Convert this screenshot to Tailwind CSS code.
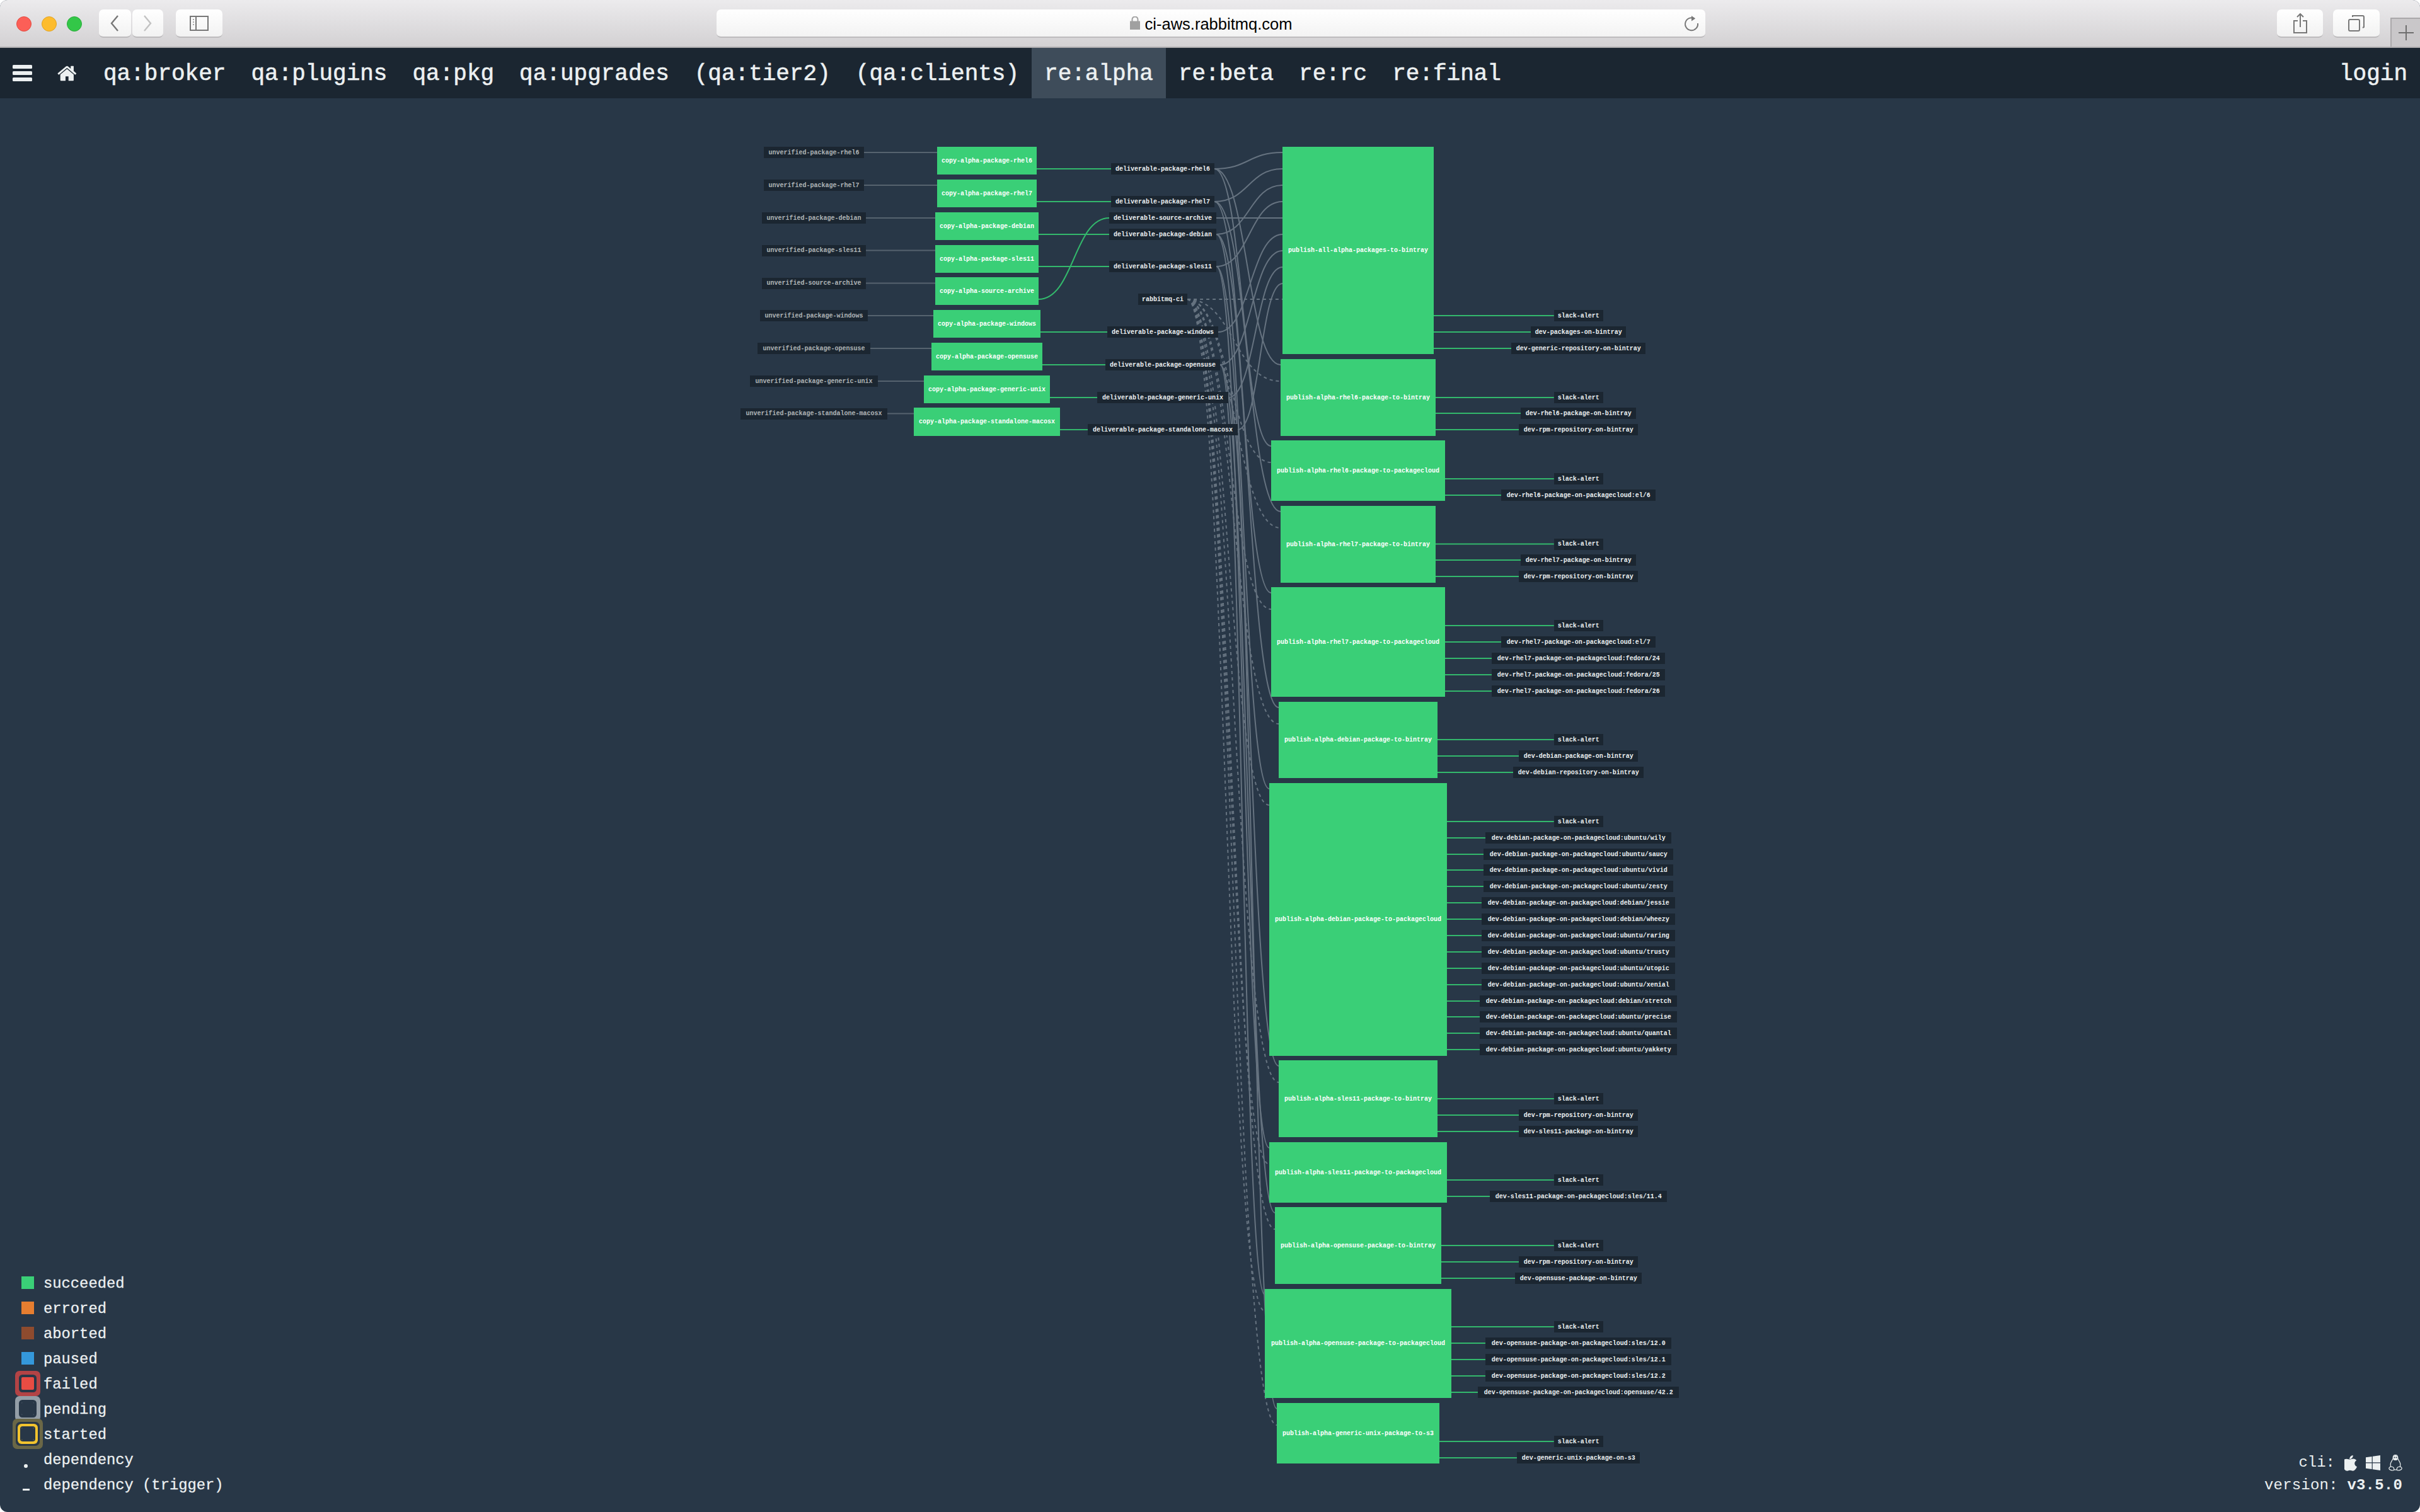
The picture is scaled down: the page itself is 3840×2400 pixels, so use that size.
<!DOCTYPE html>
<html lang="en">
<head>
    <meta charset="UTF-8">
    <title>ci-aws.rabbitmq.com</title>
    <script src="https://cdn.jsdelivr.net/npm/@tailwindcss/browser@4"></script>
</head>
<body class="bg-white [font-family:'Liberation_Mono',monospace]">
<div class="relative w-[3840px] h-[2400px] overflow-hidden rounded-[12px] bg-[#283747] flex flex-col">

    <!-- Safari toolbar -->
    <div class="h-[76px] shrink-0 flex items-center pt-px border-b-2 border-[#b0aeb0] bg-linear-to-b from-[#ecebed] to-[#d3d1d3]">
        <div class="flex gap-4 pl-[26px]">
            <div class="w-6 h-6 rounded-full bg-[#fc5f57] border border-[#e24b41]"></div>
            <div class="w-6 h-6 rounded-full bg-[#fdbc2e] border border-[#e1a325]"></div>
            <div class="w-6 h-6 rounded-full bg-[#33c748] border border-[#2aac3a]"></div>
        </div>
        <div class="ml-[27px] w-[51px] h-[45px] flex items-center justify-center rounded-[7px] border-b-2 border-[#bdbbbd] bg-linear-to-b from-white to-[#f2f2f2]">
            <svg width="14" height="26" viewBox="0 0 14 26" fill="none" stroke="#777" stroke-width="2.4"><path d="M12 1 2 13l10 12"/></svg>
        </div>
        <div class="ml-[2px] w-[49px] h-[45px] flex items-center justify-center rounded-[7px] border-b-2 border-[#bdbbbd] bg-linear-to-b from-white to-[#f2f2f2]">
            <svg width="14" height="26" viewBox="0 0 14 26" fill="none" stroke="#c2c2c2" stroke-width="2.4"><path d="m2 1 10 12L2 25"/></svg>
        </div>
        <div class="ml-5 w-[74px] h-[45px] flex items-center justify-center rounded-[7px] border-b-2 border-[#bdbbbd] bg-linear-to-b from-white to-[#f2f2f2]">
            <svg width="30" height="24" viewBox="0 0 30 24" fill="none" stroke="#777" stroke-width="2"><rect x="1" y="1" width="28" height="22"/><path d="M10 1v22"/><path d="M5 6h2M5 10h2M5 14h2" stroke="#aaa"/></svg>
        </div>
        <div class="relative ml-[784px] w-[1570px] h-[45px] flex items-center justify-center gap-2 rounded-[7px] border-b-2 border-[#bdbbbd] bg-linear-to-b from-white to-[#f3f3f3]">
            <svg width="16" height="21" viewBox="0 0 16 21"><path d="M3.500 8V5a4.500 4.500 0 0 1 9 0v3" fill="none" stroke="#a0a0a0" stroke-width="2"/><rect y="7.500" width="16" height="13.500" fill="#a0a0a0"/></svg>
            <span class="pt-1 text-[25.5px] text-black [font-family:'Liberation_Sans',sans-serif]">ci-aws.rabbitmq.com</span>
            <svg class="absolute right-[9px] top-[9px]" width="26" height="26" viewBox="0 0 26 26" fill="none" stroke="#777" stroke-width="2"><path d="M18 5.500A10 10 0 1 0 23 13"/><path d="M13 1l6 4.500-6 4" fill="#777" stroke="none"/></svg>
        </div>
        <div class="ml-[907px] w-[73px] h-[45px] flex items-center justify-center rounded-[7px] border-b-2 border-[#bdbbbd] bg-linear-to-b from-white to-[#f2f2f2]">
            <svg width="24" height="32" viewBox="0 0 24 32" fill="none" stroke="#777" stroke-width="2"><path d="M12 1v21M7 6l5-5 5 5"/><path d="M8 12H2v19h20V12h-6"/></svg>
        </div>
        <div class="ml-4 w-[74px] h-[45px] flex items-center justify-center rounded-[7px] border-b-2 border-[#bdbbbd] bg-linear-to-b from-white to-[#f2f2f2]">
            <svg width="26" height="26" viewBox="0 0 26 26" fill="none" stroke="#777" stroke-width="2"><rect x="1" y="7" width="17" height="18" rx="2"/><path d="M7 3V1h16a2 2 0 0 1 2 2v16l-2 1"/></svg>
        </div>
        <div class="ml-[17px] self-end w-[47px] h-[46px] flex items-center justify-center border-t-2 border-l-2 border-[#aaa8aa] bg-[#c9c7c9]">
            <svg width="24" height="24" viewBox="0 0 24 24" stroke="#6e6e6e" stroke-width="2"><path d="M12 0v24M0 12h24"/></svg>
        </div>
    </div>

    <!-- Navigation -->
    <nav class="h-20 shrink-0 flex items-stretch bg-[#1b2631] text-[36px] text-[#ecf0f1] [-webkit-text-stroke:0.6px_#ecf0f1]">
        <a class="flex items-center pl-5 pr-5">
            <span class="w-[31px] flex flex-col gap-[4.5px]">
                <span class="h-[5.5px] rounded-[1.5px] bg-[#ecf0f1]"></span>
                <span class="h-[5.5px] rounded-[1.5px] bg-[#ecf0f1]"></span>
                <span class="h-[5.5px] rounded-[1.5px] bg-[#ecf0f1]"></span>
            </span>
        </a>
        <a class="flex items-center px-5">
            <svg width="33" height="33" viewBox="0 0 1792 1792" fill="#ecf0f1"><path d="M1408 992v480q0 26-19 45t-45 19h-384v-384h-256v384h-384q-26 0-45-19t-19-45v-480q0-1 .5-3t.5-3l575-474 575 474q1 2 1 6zm223-69l-62 74q-8 9-21 11h-3q-13 0-21-7l-692-577-692 577q-12 8-24 7-13-2-21-11l-62-74q-8-10-7-23.5t11-21.5l719-599q32-26 76-26t76 26l244 204v-195q0-14 9-23t23-9h192q14 0 23 9t9 23v408l219 182q10 8 11 21.5t-7 23.5z"/></svg>
        </a>
        <a class="flex items-center px-5 pt-1">qa:broker</a>
        <a class="flex items-center px-5 pt-1">qa:plugins</a>
        <a class="flex items-center px-5 pt-1">qa:pkg</a>
        <a class="flex items-center px-5 pt-1">qa:upgrades</a>
        <a class="flex items-center px-5 pt-1">(qa:tier2)</a>
        <a class="flex items-center px-5 pt-1">(qa:clients)</a>
        <a class="flex items-center px-5 pt-1 bg-[#3e4c5a]">re:alpha</a>
        <a class="flex items-center px-5 pt-1">re:beta</a>
        <a class="flex items-center px-5 pt-1">re:rc</a>
        <a class="flex items-center px-5 pt-1">re:final</a>
        <a class="flex items-center px-5 pt-1 ml-auto">login</a>
    </nav>

    <main class="relative flex-1">
        <!-- graph, positions are page coordinates taken from the layout -->
        <div id="graph" class="absolute left-0 top-[-156px] w-[3840px] h-[2400px]"></div>

        <!-- Legend -->
        <div class="absolute left-0 bottom-6 text-[23.8px] text-[#ecf0f1] [-webkit-text-stroke:0.3px_#ecf0f1]">
            <div class="h-10 flex items-center"><span class="ml-[34px] mr-[15px] w-5 h-5 bg-[#3acf77]"></span><span class="mt-1">succeeded</span></div>
            <div class="h-10 flex items-center"><span class="ml-[34px] mr-[15px] w-5 h-5 bg-[#e67e30]"></span><span class="mt-1">errored</span></div>
            <div class="h-10 flex items-center"><span class="ml-[34px] mr-[15px] w-5 h-5 bg-[#8e4b2e]"></span><span class="mt-1">aborted</span></div>
            <div class="h-10 flex items-center"><span class="ml-[34px] mr-[15px] w-5 h-5 bg-[#3498db]"></span><span class="mt-1">paused</span></div>
            <div class="h-10 flex items-center"><span class="ml-[34px] mr-[15px] w-5 h-5 rounded-[2px] bg-[#e74c43] shadow-[0_0_0_4px_#283747,0_0_0_10px_#b34345]"></span><span class="mt-1">failed</span></div>
            <div class="h-10 flex items-center"><span class="ml-[34px] mr-[15px] w-5 h-5 rounded-[2px] shadow-[0_0_0_4px_#283747,0_0_0_10px_#949ea7]"></span><span class="mt-1">pending</span></div>
            <div class="h-10 flex items-center"><span class="ml-[34px] mr-[15px] w-5 h-5 rounded-[2px] shadow-[0_0_0_2px_#283747,0_0_0_6px_#f1c32e,0_0_0_9px_#283747,0_0_0_14px_#6a6746]"></span><span class="mt-1">started</span></div>
            <div class="h-10 flex items-center"><span class="ml-[38px] mr-[25px] mt-[22px] w-[6px] h-[6px] rounded-full bg-[#ecf0f1]"></span><span class="mt-1">dependency</span></div>
            <div class="h-10 flex items-center"><span class="ml-9 mr-[22px] mt-4 w-[11px] h-[3px] bg-[#ecf0f1]"></span><span class="mt-1">dependency (trigger)</span></div>
        </div>

        <!-- cli / version -->
        <div class="absolute right-[28px] bottom-6 flex flex-col items-end text-[24px] leading-9 text-[#ecf0f1]">
            <div class="flex items-center">
                <span class="mr-[15px]">cli:</span>
                <svg class="mr-[13px]" width="21" height="25" viewBox="200 0 1250 1680" preserveAspectRatio="none" fill="#ecf0f1"><path d="M1393 1215q-39 125-123 250-129 196-257 196-49 0-140-32-86-32-151-32-61 0-142 33-81 34-132 34-152 0-301-259-147-261-147-503 0-228 113-374 113-144 284-144 72 0 177 30 104 30 138 30 45 0 143-34 102-34 173-34 119 0 213 65 52 36 104 100-79 67-114 118-65 94-65 207 0 124 69 223t158 126zm-376-1173q0 61-29 136-30 75-93 138-54 54-108 72-37 11-104 17 3-149 78-257 74-107 250-148 1 3 2.5 11t2.5 11q0 4 .5 10t.5 10z"/></svg>
                <svg class="mr-[13px]" width="23" height="24" viewBox="0 0 23 24" fill="#ecf0f1"><path d="M0 3.300 9.600 2v9.300H0zM10.800 1.800 23 0v11.300H10.800zM0 12.600h9.600V22L0 20.700zM10.800 12.600H23V24l-12.200-1.800z"/></svg>
                <svg width="22" height="26" viewBox="0 0 22 26" fill="none" stroke="#ecf0f1" stroke-width="1.2"><path d="M11 .5c-3 0-4 2.500-3.800 5 .1 2-2.700 4.500-3.700 8-.6 2.200-.5 4 .5 6M11 .5c3 0 4 2.500 3.800 5-.1 2 2.700 4.500 3.700 8 .6 2.200.5 4-.5 6"/><path d="M7.500 8C7 5 7.500 1 11 1s4 4 3.500 7c-1.500 1.300-5.500 1.300-7 0z" fill="#ecf0f1" stroke="none"/><circle cx="9.500" cy="4.500" r=".9" fill="#283747" stroke="none"/><circle cx="12.500" cy="4.500" r=".9" fill="#283747" stroke="none"/><path d="M4 19c-2 0-3.500 2-3 3.500S5 25 7 25s2-2 1.500-3.500S6 19 4 19zM18 19c2 0 3.500 2 3 3.500S17 25 15 25s-2-2-1.500-3.500S16 19 18 19z"/><path d="M8.500 24h5"/></svg>
            </div>
            <div class="tracking-[0.2px]">version: <b>v3.5.0</b></div>
        </div>
    </main>
</div>

<script>
    const graph = document.getElementById('graph');

    // name, left edge, y of the row. Nodes are centred on their column
    const RIGHT_C = 2504.7;
    const SLACK = 2465.7;

    const unverified = [
        ['unverified-package-rhel6', 1212, 242],
        ['unverified-package-rhel7', 1212, 294],
        ['unverified-package-debian', 1209, 346],
        ['unverified-package-sles11', 1209, 397.5],
        ['unverified-source-archive', 1209, 449.5],
        ['unverified-package-windows', 1206, 501],
        ['unverified-package-opensuse', 1202, 553],
        ['unverified-package-generic-unix', 1190, 605],
        ['unverified-package-standalone-macosx', 1175, 656.5],
    ];

    const copies = [
        ['copy-alpha-package-rhel6', 1487, 233, 277, 268],
        ['copy-alpha-package-rhel7', 1487, 285, 329, 320],
        ['copy-alpha-package-debian', 1484, 337, 381, 372],
        ['copy-alpha-package-sles11', 1484, 389, 433, 423],
        ['copy-alpha-source-archive', 1484, 440, 484, 475],
        ['copy-alpha-package-windows', 1481, 492, 536, 527],
        ['copy-alpha-package-opensuse', 1478, 544, 588, 579],
        ['copy-alpha-package-generic-unix', 1466, 596, 640, 631],
        ['copy-alpha-package-standalone-macosx', 1450, 647, 692, 682],
    ];

    const deliverables = {
        rhel6: ['deliverable-package-rhel6', 1763, 268],
        rhel7: ['deliverable-package-rhel7', 1763, 320],
        source: ['deliverable-source-archive', 1760, 346],
        debian: ['deliverable-package-debian', 1760, 372],
        sles: ['deliverable-package-sles11', 1760, 423],
        rabbit: ['rabbitmq-ci', 1806, 475],
        windows: ['deliverable-package-windows', 1757, 527],
        opensuse: ['deliverable-package-opensuse', 1754, 579],
        generic: ['deliverable-package-generic-unix', 1741, 631],
        standalone: ['deliverable-package-standalone-macosx', 1726, 682],
    };

    const publishes = [
        { name: 'publish-alpha-rhel6-package-to-bintray', x: 2032, y0: 570, y1: 692, from: 'rhel6', out: [['slack-alert', SLACK, 631], ['dev-rhel6-package-on-bintray', 2413, 656], ['dev-rpm-repository-on-bintray', 2410, 682]] },
        { name: 'publish-alpha-rhel6-package-to-packagecloud', x: 2017, y0: 699, y1: 795, from: 'rhel6', out: [['slack-alert', SLACK, 760], ['dev-rhel6-package-on-packagecloud:el/6', 2382, 786]] },
        { name: 'publish-alpha-rhel7-package-to-bintray', x: 2032, y0: 803, y1: 925, from: 'rhel7', out: [['slack-alert', SLACK, 863.5], ['dev-rhel7-package-on-bintray', 2413, 889], ['dev-rpm-repository-on-bintray', 2410, 915]] },
        { name: 'publish-alpha-rhel7-package-to-packagecloud', x: 2017, y0: 932, y1: 1106, from: 'rhel7', out: [['slack-alert', SLACK, 993], ['dev-rhel7-package-on-packagecloud:el/7', 2382, 1019], ['dev-rhel7-package-on-packagecloud:fedora/24', 2367, 1045], ['dev-rhel7-package-on-packagecloud:fedora/25', 2367, 1071], ['dev-rhel7-package-on-packagecloud:fedora/26', 2367, 1097]] },
        { name: 'publish-alpha-debian-package-to-bintray', x: 2029, y0: 1114, y1: 1235, from: 'debian', out: [['slack-alert', SLACK, 1174], ['dev-debian-package-on-bintray', 2410, 1200], ['dev-debian-repository-on-bintray', 2401, 1226]] },
        { name: 'publish-alpha-debian-package-to-packagecloud', x: 2014, y0: 1243, y1: 1676, from: 'debian', out: [['slack-alert', SLACK, 1304], ['dev-debian-package-on-packagecloud:ubuntu/wily', 2357, 1330], ['dev-debian-package-on-packagecloud:ubuntu/saucy', 2354, 1356], ['dev-debian-package-on-packagecloud:ubuntu/vivid', 2354, 1381], ['dev-debian-package-on-packagecloud:ubuntu/zesty', 2354, 1407], ['dev-debian-package-on-packagecloud:debian/jessie', 2351, 1433], ['dev-debian-package-on-packagecloud:debian/wheezy', 2351, 1459], ['dev-debian-package-on-packagecloud:ubuntu/raring', 2351, 1485], ['dev-debian-package-on-packagecloud:ubuntu/trusty', 2351, 1511], ['dev-debian-package-on-packagecloud:ubuntu/utopic', 2351, 1537], ['dev-debian-package-on-packagecloud:ubuntu/xenial', 2351, 1563], ['dev-debian-package-on-packagecloud:debian/stretch', 2348, 1589], ['dev-debian-package-on-packagecloud:ubuntu/precise', 2348, 1614], ['dev-debian-package-on-packagecloud:ubuntu/quantal', 2348, 1640], ['dev-debian-package-on-packagecloud:ubuntu/yakkety', 2348, 1666]] },
        { name: 'publish-alpha-sles11-package-to-bintray', x: 2029, y0: 1683, y1: 1805, from: 'sles', out: [['slack-alert', SLACK, 1744], ['dev-rpm-repository-on-bintray', 2410, 1770], ['dev-sles11-package-on-bintray', 2410, 1796]] },
        { name: 'publish-alpha-sles11-package-to-packagecloud', x: 2014, y0: 1813, y1: 1909, from: 'sles', out: [['slack-alert', SLACK, 1873], ['dev-sles11-package-on-packagecloud:sles/11.4', 2364, 1899]] },
        { name: 'publish-alpha-opensuse-package-to-bintray', x: 2023, y0: 1916, y1: 2038, from: 'opensuse', out: [['slack-alert', SLACK, 1977], ['dev-rpm-repository-on-bintray', 2410, 2003], ['dev-opensuse-package-on-bintray', 2404, 2029]] },
        { name: 'publish-alpha-opensuse-package-to-packagecloud', x: 2007, y0: 2046, y1: 2219, from: 'opensuse', out: [['slack-alert', SLACK, 2106], ['dev-opensuse-package-on-packagecloud:sles/12.0', 2357, 2132], ['dev-opensuse-package-on-packagecloud:sles/12.1', 2357, 2158], ['dev-opensuse-package-on-packagecloud:sles/12.2', 2357, 2184], ['dev-opensuse-package-on-packagecloud:opensuse/42.2', 2345, 2210]] },
        { name: 'publish-alpha-generic-unix-package-to-s3', x: 2026, y0: 2227, y1: 2323, from: 'generic', out: [['slack-alert', SLACK, 2288], ['dev-generic-unix-package-on-s3', 2407, 2314]] },
    ];

    const publishAll = {
        name: 'publish-all-alpha-packages-to-bintray', x: 2035, y0: 233, y1: 562,
        out: [['slack-alert', SLACK, 501], ['dev-packages-on-bintray', 2429, 527], ['dev-generic-repository-on-bintray', 2398, 553]],
    };

    let edges = '';
    let nodes = '';

    function line(x1, y, x2, stroke) {
        edges += `<path d="M${x1} ${y}L${x2} ${y}" stroke="${stroke}" stroke-width="2"/>`;
    }

    // S curve between two rows, leaves and arrives horizontally
    function curve(x1, y1, x2, y2, dashed, stroke) {
        const c = (x1 + x2) / 2;
        const dash = dashed ? ' stroke-dasharray="5 5"' : '';
        edges += `<path d="M${x1} ${y1}C${c} ${y1} ${c} ${y2} ${x2} ${y2}" stroke="${stroke}" stroke-width="2" fill="none"${dash}/>`;
    }

    function label(name, x0, cx, y, textClass) {
        const w = (cx - x0) * 2;
        nodes += `<div class="absolute h-[18px] flex items-center justify-center whitespace-nowrap bg-[#1b2631] text-[10px] font-bold ${textClass}" style="left:${x0}px;top:${y - 9}px;width:${w}px">${name}</div>`;
    }

    function task(name, x0, cx, y0, y1) {
        const w = (cx - x0) * 2;
        nodes += `<div class="absolute flex items-center justify-center whitespace-nowrap bg-[#3acf77] text-[10px] font-bold text-white" style="left:${x0}px;top:${y0}px;width:${w}px;height:${y1 - y0}px">${name}</div>`;
    }

    const GREY = '#667380';
    const GREEN = '#33b86c';
    const COPY_C = 1566;
    const DELIV_C = 1845;
    const UNVER_C = 1291.5;
    const PUB_C = 2155;

    unverified.forEach(([name, x0, y], i) => {
        label(name, x0, UNVER_C, y, 'text-[#b0b5b8]');
        line(2 * UNVER_C - x0, y, copies[i][1], '#56636f');
    });

    copies.forEach(([name, x0, y0, y1, outY]) => {
        task(name, x0, COPY_C, y0, y1);
        const right = 2 * COPY_C - x0;
        if (name === 'copy-alpha-source-archive') {
            curve(right, outY, deliverables.source[1], deliverables.source[2], false, GREEN);
        } else {
            const target = Object.values(deliverables).find(d => d[2] === outY);
            line(right, outY, target[1], GREEN);
        }
    });

    Object.values(deliverables).forEach(([name, x0, y]) => label(name, x0, DELIV_C, y, 'text-[#ecf0f1]'));

    const rightOf = key => 2 * DELIV_C - deliverables[key][1];

    // everything feeds publish-all
    [['rhel6', 242], ['rhel7', 268], ['debian', 294], ['sles', 320], ['source', 346], ['windows', 372], ['opensuse', 398], ['generic', 424], ['standalone', 450]]
        .forEach(([key, y]) => curve(rightOf(key), deliverables[key][2], publishAll.x, y, false, GREY));
    curve(rightOf('rabbit'), 475, publishAll.x, 475, true, GREY);

    publishes.forEach(p => {
        curve(rightOf(p.from), deliverables[p.from][2], p.x, p.y0 + 9, false, GREY);
        curve(rightOf('rabbit'), 475, p.x, p.y0 + 35, true, GREY);
    });

    [publishAll, ...publishes].forEach(p => {
        task(p.name, p.x, PUB_C, p.y0, p.y1);
        p.out.forEach(([name, x0, y]) => {
            label(name, x0, RIGHT_C, y, 'text-[#ecf0f1]');
            line(2 * PUB_C - p.x, y, x0, GREEN);
        });
    });

    graph.innerHTML = `<svg class="absolute inset-0" width="3840" height="2400" fill="none">${edges}</svg>${nodes}`;
</script>
</body>
</html>
